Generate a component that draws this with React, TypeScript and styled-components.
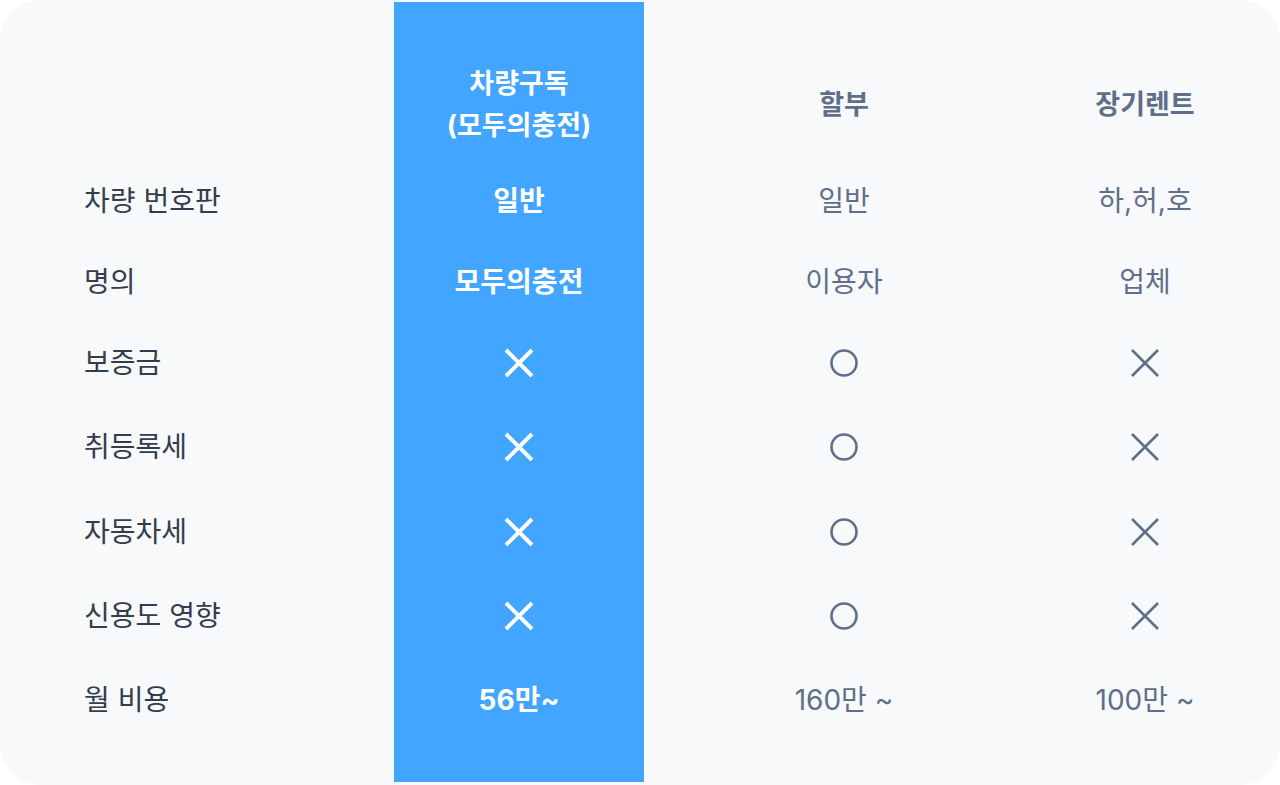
import React from 'react';
import styled, { createGlobalStyle } from 'styled-components';

const GlobalStyle = createGlobalStyle`
  html, body {
    margin: 0;
    padding: 0;
    background: #ffffff;
  }
  body {
    font-family: Inter, "Noto Sans CJK KR", sans-serif;
  }
`;

const colors = {
  card: '#f7f9fb',
  blue: '#42a5ff',
  label: '#333d4b',
  value: '#5f6f89',
  white: '#ffffff'
};

// row heights under the header, top to bottom
const ROW_HEIGHTS = [82, 80, 82, 85, 85, 84, 84];

type Mark = 'x' | 'o';
type CellValue = string | Mark;

interface Plan {
  title: string[];
  values: CellValue[];
  width: number;
  highlight?: boolean;
}

const labels = ['차량 번호판', '명의', '보증금', '취등록세', '자동차세', '신용도 영향', '월 비용'];

const plans: Plan[] = [
  {
    title: ['차량구독', '(모두의충전)'],
    values: ['일반', '모두의충전', 'x', 'x', 'x', 'x', '56만~'],
    width: 250,
    highlight: true
  },
  {
    title: ['할부'],
    values: ['일반', '이용자', 'o', 'o', 'o', 'o', '160만 ~'],
    width: 400
  },
  {
    title: ['장기렌트'],
    values: ['하,허,호', '업체', 'x', 'x', 'x', 'x', '100만 ~'],
    width: 202
  }
];

const Card = styled.div`
  box-sizing: border-box;
  width: 1280px;
  height: 785px;
  border-radius: 40px;
  background: ${colors.card};
  display: flex;
  padding: 2px 34px 3px 0;
  overflow: hidden;
`;

const Column = styled.div<{ $width: number; $highlight?: boolean }>`
  width: ${(p) => p.$width}px;
  flex: none;
  display: flex;
  flex-direction: column;
  background: ${(p) => (p.$highlight ? colors.blue : 'transparent')};
  color: ${(p) => (p.$highlight ? colors.white : colors.value)};
`;

const LabelColumn = styled.div`
  width: 394px;
  flex: none;
  box-sizing: border-box;
  padding-left: 84px;
  display: flex;
  flex-direction: column;
  color: ${colors.label};
`;

const HeaderCell = styled.div`
  height: 158px;
  box-sizing: border-box;
  padding-top: 48px;
  display: flex;
  flex-direction: column;
  align-items: center;
  justify-content: center;
  font-size: 27px;
  font-weight: 700;
  line-height: 42px;
`;

const Cell = styled.div<{ $h: number; $bold?: boolean; $icon?: boolean; $align?: 'start' | 'center' }>`
  height: ${(p) => p.$h}px;
  box-sizing: border-box;
  padding-bottom: ${(p) => (p.$icon ? 0 : 4)}px;
  display: flex;
  align-items: center;
  justify-content: ${(p) => (p.$align === 'start' ? 'flex-start' : 'center')};
  font-size: 28px;
  font-weight: ${(p) => (p.$bold ? 700 : 400)};
  white-space: nowrap;
`;

const CrossIcon = ({ heavy }: { heavy?: boolean }) => (
  <svg width="30" height="30" viewBox="0 0 30 30" fill="none">
    <path
      d="M2 2 L28 28 M28 2 L2 28"
      stroke="currentColor"
      strokeWidth={heavy ? 4 : 2.6}
    />
  </svg>
);

const CircleIcon = () => (
  <svg width="30" height="30" viewBox="0 0 30 30" fill="none">
    <circle cx="15" cy="15" r="12.5" stroke="currentColor" strokeWidth="2.6" />
  </svg>
);

const isMark = (v: CellValue): v is Mark => v === 'x' || v === 'o';

const renderValue = (v: CellValue, heavy?: boolean) => {
  if (v === 'x') return <CrossIcon heavy={heavy} />;
  if (v === 'o') return <CircleIcon />;
  return v;
};

export default function App() {
  return (
    <>
      <GlobalStyle />
      <Card>
        <LabelColumn>
          <HeaderCell />
          {labels.map((label, i) => (
            <Cell key={label} $h={ROW_HEIGHTS[i]} $align="start">
              {label}
            </Cell>
          ))}
        </LabelColumn>
        {plans.map((plan) => (
          <Column key={plan.title[0]} $width={plan.width} $highlight={plan.highlight}>
            <HeaderCell>
              {plan.title.map((line) => (
                <span key={line}>{line}</span>
              ))}
            </HeaderCell>
            {plan.values.map((v, i) => (
              <Cell key={i} $h={ROW_HEIGHTS[i]} $bold={plan.highlight} $icon={isMark(v)}>
                {renderValue(v, plan.highlight)}
              </Cell>
            ))}
          </Column>
        ))}
      </Card>
    </>
  );
}
